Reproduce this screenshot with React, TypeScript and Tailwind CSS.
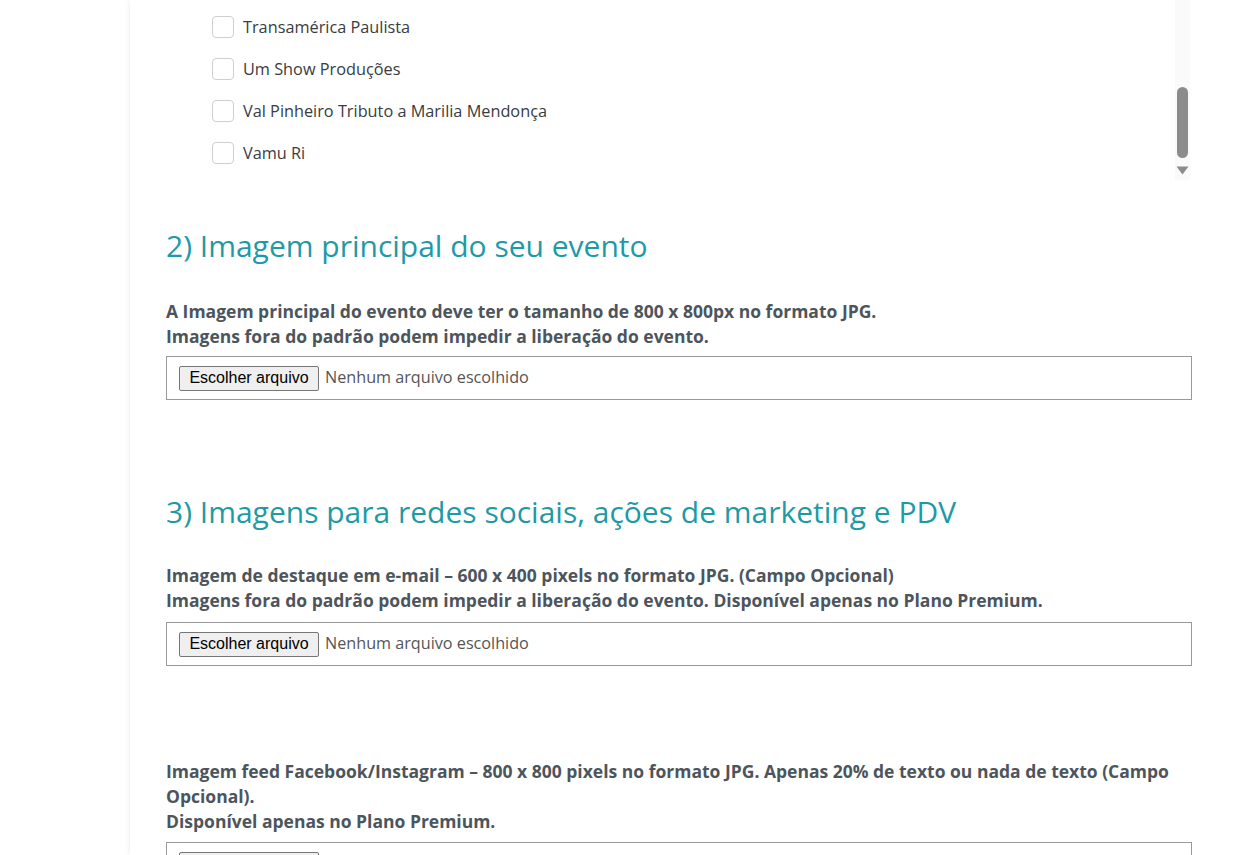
import React from "react";

const rows = [
  "Transamérica Paulista",
  "Um Show Produções",
  "Val Pinheiro Tributo a Marilia Mendonça",
  "Vamu Ri",
];

function FileBox() {
  return (
    <div className="flex h-[44px] w-[1026px] items-center border border-[#999999] bg-white pl-[12px]">
      <button
        type="button"
        className="h-[25px] w-[140px] rounded-[2px] border border-[#767676] bg-[#efefef] pb-[1px] text-[16px] leading-none text-black"
        style={{ fontFamily: '"Liberation Sans", Arial, sans-serif' }}
      >
        Escolher arquivo
      </button>
      <span className="ml-[6px] pb-[2px] text-[16.2px] text-[#555555]">Nenhum arquivo escolhido</span>
    </div>
  );
}

export default function App() {
  return (
    <div
      className="flex h-[855px] w-[1259px] overflow-hidden bg-white"
      style={{ fontFamily: '"Open Sans", "Noto Sans", sans-serif' }}
    >
      <div className="w-[130px] shrink-0 bg-white" />
      <div className="flex-1 bg-white pl-[36px] shadow-[0_0_6px_rgba(0,0,0,0.09)]">
        {/* scrolled checkbox list */}
        <div className="relative h-[180px] w-[1026px]">
          <div className="flex flex-col pt-[6px] pl-[46px]">
            {rows.map((r) => (
              <label key={r} className="flex h-[42px] items-center">
                <span className="h-[22px] w-[22px] rounded-[4px] border border-[#cfcfcf] bg-white" />
                <span className="ml-[9px] text-[16.3px] text-[#393c40]">{r}</span>
              </label>
            ))}
          </div>
          <div className="absolute right-[2px] top-0 h-[180px] w-[15px] bg-[#fafafa]">
            <div className="absolute left-[2px] top-[87px] h-[71px] w-[11px] rounded-full bg-[#8c8c8c]" />
            <svg className="absolute left-[1px] top-[166px]" width="13" height="9" viewBox="0 0 13 9">
              <path d="M0.5 0.5 L12.5 0.5 L6.5 8.5 Z" fill="#8c8c8c" />
            </svg>
          </div>
        </div>

        <h2 className="mt-[48px] text-[30px] leading-[36px] font-normal text-[#1e9aa6]">
          2) Imagem principal do seu evento
        </h2>
        <p className="mt-[35px] text-[17.5px] leading-[25px] font-bold text-[#4d555c]">
          A Imagem principal do evento deve ter o tamanho de 800 x 800px no formato JPG.
          <br />
          Imagens fora do padrão podem impedir a liberação do evento.
        </p>
        <div className="mt-[7px]">
          <FileBox />
        </div>

        <h2 className="mt-[94px] text-[30px] leading-[36px] font-normal text-[#1e9aa6]">
          3) Imagens para redes sociais, ações de marketing e PDV
        </h2>
        <p className="mt-[33px] text-[17.5px] leading-[25px] font-bold text-[#4d555c]">
          Imagem de destaque em e-mail – 600 x 400 pixels no formato JPG. (Campo Opcional)
          <br />
          Imagens fora do padrão podem impedir a liberação do evento. Disponível apenas no Plano Premium.
        </p>
        <div className="mt-[9px]">
          <FileBox />
        </div>

        <p className="mt-[93px] w-[1026px] text-[17.5px] leading-[25px] font-bold text-[#4d555c]">
          Imagem feed Facebook/Instagram – 800 x 800 pixels no formato JPG. Apenas 20% de texto ou nada de texto (Campo Opcional).
          <br />
          Disponível apenas no Plano Premium.
        </p>
        <div className="mt-[8px]">
          <FileBox />
        </div>
      </div>
    </div>
  );
}
